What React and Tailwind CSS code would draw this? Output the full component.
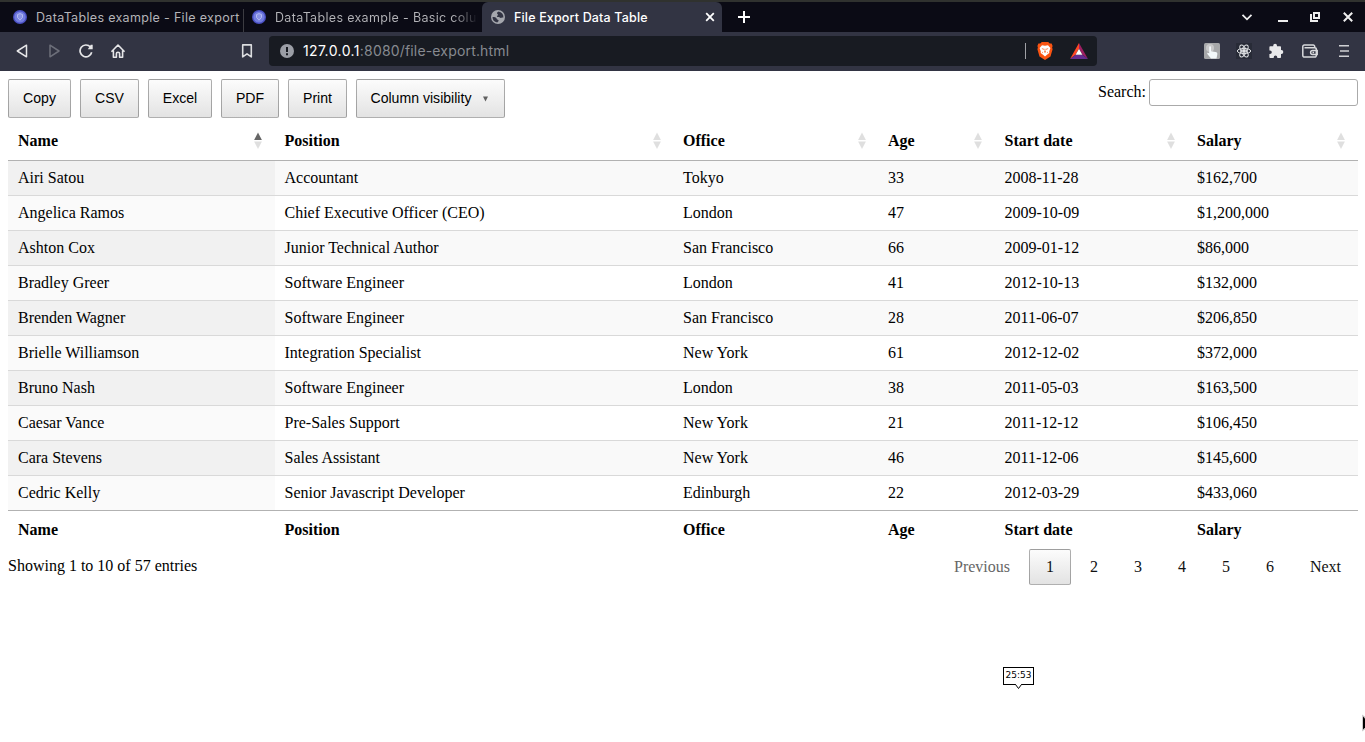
import React from "react";

const columns = ["Name", "Position", "Office", "Age", "Start date", "Salary"];

const rows = [
  ["Airi Satou", "Accountant", "Tokyo", "33", "2008-11-28", "$162,700"],
  ["Angelica Ramos", "Chief Executive Officer (CEO)", "London", "47", "2009-10-09", "$1,200,000"],
  ["Ashton Cox", "Junior Technical Author", "San Francisco", "66", "2009-01-12", "$86,000"],
  ["Bradley Greer", "Software Engineer", "London", "41", "2012-10-13", "$132,000"],
  ["Brenden Wagner", "Software Engineer", "San Francisco", "28", "2011-06-07", "$206,850"],
  ["Brielle Williamson", "Integration Specialist", "New York", "61", "2012-12-02", "$372,000"],
  ["Bruno Nash", "Software Engineer", "London", "38", "2011-05-03", "$163,500"],
  ["Caesar Vance", "Pre-Sales Support", "New York", "21", "2011-12-12", "$106,450"],
  ["Cara Stevens", "Sales Assistant", "New York", "46", "2011-12-06", "$145,600"],
  ["Cedric Kelly", "Senior Javascript Developer", "Edinburgh", "22", "2012-03-29", "$433,060"],
];

const gridCols = "grid grid-cols-[266.5px_398.5px_205px_116.5px_192.6px_170.9px]";

function TablesFavicon() {
  return (
    <svg className="size-[14px] shrink-0" viewBox="0 0 14 14">
      <circle cx="7" cy="7" r="7" fill="#4a50c4" />
      <circle cx="7" cy="7" r="5.600" fill="#747ee0" />
      <path d="M4.500 4.600L7 3.600l2.500 1v2.900L7 10.200 4.500 7.500z" fill="#8a93e6" stroke="#b4bbf2" strokeWidth="1" />
    </svg>
  );
}

function Globe() {
  return (
    <svg className="size-[14px] shrink-0" viewBox="0 0 14 14">
      <circle cx="7" cy="7" r="7" fill="#a5a7ad" />
      <path d="M7.600 1.600c-1 .5-1.700 1-1.500 1.900.1.700 1 .6 1 1.300 0 .8-1.300.8-1.200 1.600.1.700 1.100.5 1.900.6.900.1 1.100.9 2 .9.700 0 1.100-.5 2.600-.4A5.500 5.500 0 0 0 7.600 1.600z" fill="#323443" />
      <path d="M1.500 7.100c1.500-.1 3 .1 3.800.8.600.6.300 1.300 1 1.600.8.400 1.300.4 1.300 1.200 0 .7-.8 1-1.400 1.700A5.500 5.500 0 0 1 1.500 7.100z" fill="#323443" />
    </svg>
  );
}

function TabBar() {
  return (
    <div className="flex h-[32px] border-t-2 border-[#30322f] bg-[#0b0b15] text-[13px] text-[#b4b4b8]">
      <div className="flex w-[244px] items-center gap-[9px] pl-[13px]">
        <TablesFavicon />
        <span className="pt-[2px] text-[12.5px] whitespace-nowrap tracking-[0.32px]">DataTables example - File export</span>
      </div>
      <div className="mt-[7px] -ml-px h-[23px] w-px shrink-0 bg-[#3c3c42]" />
      <div className="flex w-[238px] items-center gap-[9px] pl-[8px]">
        <TablesFavicon />
        <span className="w-[203px] overflow-hidden bg-linear-to-r from-[#b4b4b8] from-88% to-transparent bg-clip-text pt-[2px] text-[12.5px] whitespace-nowrap text-transparent tracking-[0.32px]">
          DataTables example - Basic column
        </span>
      </div>
      <div className="flex w-[240px] items-center rounded-t-[6px] bg-[#323443] pr-[7px] pl-[9px] text-white">
        <Globe />
        <span className="ml-[9px] flex-1 pt-[2px] text-[12.5px] font-medium whitespace-nowrap tracking-[0.16px]">File Export Data Table</span>
        <svg className="size-[10px]" viewBox="0 0 10 10" stroke="#fff" strokeWidth="1.8">
          <path d="M1.200 1.200l7.600 7.600M8.800 1.200l-7.600 7.600" />
        </svg>
      </div>
      <svg className="mt-[9px] ml-[16px] size-[12px]" viewBox="0 0 12 12" stroke="#fff" strokeWidth="2">
        <path d="M6 0v12M0 6h12" />
      </svg>
      <div className="flex-1" />
      <div className="flex h-full items-center pr-[12px] pb-px">
        <svg className="h-[12px] w-[12px]" viewBox="0 0 12 12" fill="none" stroke="#eee" strokeWidth="1.800">
          <path d="M1.500 3.800L6 8.300l4.500-4.500" />
        </svg>
        <svg className="ml-[25px] h-[12px] w-[10px]" viewBox="0 0 10 12">
          <rect y="9" width="10" height="2" fill="#eee" />
        </svg>
        <svg className="ml-[22px] size-[10px]" viewBox="0 0 10 10" fill="none" stroke="#eee" strokeWidth="2">
          <path d="M4 1h5v5H4zM1 2v7h7" />
        </svg>
        <svg className="ml-[23px] size-[10px]" viewBox="0 0 10 10" stroke="#eee" strokeWidth="2">
          <path d="M.8.8l8.400 8.400M9.200.8L.8 9.200" />
        </svg>
      </div>
    </div>
  );
}

function ReactMark() {
  return (
    <svg className="size-[16px]" viewBox="0 0 16 16" fill="none" stroke="#dfe1e4" strokeWidth="1">
      <rect width="16" height="16" fill="#282b37" stroke="none" />
      <circle cx="8" cy="8" r="1.400" fill="#dfe1e4" />
      <ellipse cx="8" cy="8" rx="6.700" ry="2.600" />
      <ellipse cx="8" cy="8" rx="6.700" ry="2.600" transform="rotate(60 8 8)" />
      <ellipse cx="8" cy="8" rx="6.700" ry="2.600" transform="rotate(120 8 8)" />
    </svg>
  );
}

function Toolbar() {
  return (
    <div className="flex h-[39px] items-center bg-[#323443] pr-[16px] pb-px pl-[16px]">
      <svg className="size-[14px]" viewBox="0 0 14 14" fill="none" stroke="#e6e6e8" strokeWidth="1.500" strokeLinejoin="round">
        <path d="M10.500 1.200v11.600L1.300 7z" />
      </svg>
      <svg className="ml-[17px] size-[14px]" viewBox="0 0 14 14" fill="none" stroke="#6d6f7a" strokeWidth="1.500" strokeLinejoin="round">
        <path d="M3 1.200v11.600L12 7z" />
      </svg>
      <svg className="ml-[18px] size-[14px]" viewBox="0 0 14 14" fill="none" stroke="#e6e6e8" strokeWidth="1.700">
        <path d="M12.700 8.300A5.900 5.900 0 1 1 11.400 3" />
        <path d="M8.800 5.200h4.900V.7h-1.900z" fill="#e6e6e8" stroke="none" />
      </svg>
      <svg className="ml-[17px] size-[16px]" viewBox="0 0 16 16" fill="none" stroke="#e6e6e8" strokeWidth="1.600" strokeLinejoin="round" strokeLinecap="round">
        <path d="M1.900 8.300L8 2l6.100 6.300M3.400 7.400v6.800h3v-3.600c0-.9.600-1.400 1.600-1.400s1.600.5 1.600 1.400v3.600h3V7.400" />
      </svg>
      <svg className="ml-[115px] h-[14px] w-[12px]" viewBox="0 0 12 14" fill="none" stroke="#dcdde0" strokeWidth="1.600" strokeLinejoin="round">
        <path d="M1.700.9h8.600v12L6 9.800l-4.300 3.100z" />
      </svg>
      <div className="ml-[16px] flex h-[30px] w-[828px] items-center rounded-[4px] bg-[#181b22] pr-[9px] pl-[11px]">
        <svg className="size-[14px]" viewBox="0 0 14 14">
          <circle cx="7" cy="7" r="7" fill="#9b9ea6" />
          <path d="M6 3h2v5H6zM6 9.200h2v2H6z" fill="#181b22" />
        </svg>
        <span className="ml-[9px] flex-1 pb-[2px] whitespace-nowrap text-[14px] tracking-[0.17px] text-[#878a90]">
          <span className="tracking-[0.4px] text-white">127.0.0.1</span>:8080/file-export.html
        </span>
        <div className="h-[16px] w-px bg-[#a0a1a6]" />
        <svg className="ml-[11px] h-[18px] w-[16px]" viewBox="0 0 16 18">
          <path d="M4.800 0h6.400l1.500 1.600 1.900-.2 1 2.500-.5 1.600.5 1.700-2.100 7.300L8 18l-5.500-3.500L.4 7.200l.5-1.700L.4 3.900l1-2.500 1.900.2z" fill="#fb5412" />
          <path d="M5 3.300l3 .5 3-.5 2.400 2.800-1.200 3.300.1 1.500-2.300 1.900L8 14.500l-2-1.700-2.300-1.900.1-1.500L2.600 6.100z" fill="#fff" />
          <path d="M4.500 6.200l2.300.5-.4 1.200zM11.500 6.200l-2.300.5.4 1.200zM7.600 6.800h.8L8.300 9l.7 1L8 10.700 7 10l.7-1zM5.300 9.600l.8 1.600-1-.4zM10.700 9.600l-.8 1.600 1-.4z" fill="#fb5412" />
        </svg>
        <svg className="ml-[17px] h-[16px] w-[18px]" viewBox="0 0 18 16">
          <path d="M9 0v5.500L5.600 11.800 0 16z" fill="#ff4724" />
          <path d="M9 0l9 16-5.600-4.200L9 5.500z" fill="#9e1f63" />
          <path d="M0 16l5.600-4.200h6.800L18 16z" fill="#662d91" />
          <path d="M9 5.800l3.400 6H5.600z" fill="#fff" />
        </svg>
      </div>
      <div className="flex flex-1 items-center justify-end">
        <svg className="size-[16px]" viewBox="0 0 16 16">
          <rect width="16" height="16" rx="1.500" fill="#a7a8aa" />
          <circle cx="6" cy="5" r="4" fill="#c8c8c9" />
          <path d="M5.200 4.200c0-1.300 1.800-1.300 1.800 0v4l4.500.8c1.500.3 2 1 1.800 2.400L12.500 15.500H7L3.400 11c-.6-1 .5-1.700 1.800-.6z" fill="#f3f8fa" />
        </svg>
        <div className="ml-[16px]"><ReactMark /></div>
        <svg className="ml-[16px] size-[16px]" viewBox="0 0 16 16" fill="#e9e9eb">
          <path d="M2.200 3.200h3V2.700a1.900 1.900 0 1 1 3.800 0v.5h3.200c.5 0 .8.300.8.800v3.100h.4a1.900 1.900 0 0 1 0 3.800H13v3.300c0 .5-.3.800-.8.800H9.300v-.6a1.800 1.800 0 0 0-3.600 0v.6H2.200c-.5 0-.8-.3-.8-.8v-3.200H2a1.800 1.800 0 0 0 0-3.600h-.6V4c0-.5.300-.8.800-.8z" />
        </svg>
        <svg className="ml-[18px] h-[14px] w-[16px]" viewBox="0 0 16 14" fill="none" stroke="#d8d9dc" strokeWidth="1.500">
          <path d="M12.700 3.600V2.500A1.500 1.500 0 0 0 11.200 1H2.300A1.500 1.500 0 0 0 .8 2.500v8.900a1.700 1.700 0 0 0 1.700 1.700h10.300a1.500 1.500 0 0 0 1.500-1.500V5.200a1.500 1.500 0 0 0-1.500-1.500H2.500" />
          <path d="M15.200 6.400h-4.600a2 2 0 0 0 0 4h4.600zM10.500 8.400h1.600" />
        </svg>
        <svg className="ml-[21px] h-[12px] w-[10px]" viewBox="0 0 10 12" fill="#cfd0d4">
          <path d="M0 0h10v1.600H0zM1 5.200h9v1.600H1zM0 10.400h10V12H0z" />
        </svg>
      </div>
    </div>
  );
}

const actions = [
  ["Copy", "w-[63px]"],
  ["CSV", "w-[59px]"],
  ["Excel", "w-[64px]"],
  ["PDF", "w-[58px]"],
  ["Print", "w-[59px]"],
];

function Controls() {
  return (
    <div className="flex h-[42px] items-start justify-between">
      <div className="flex gap-[9px] font-['Liberation_Sans',sans-serif] text-[14.08px]">
        {actions.map(([label, width]) => (
          <button
            key={label}
            className={`${width} h-[39px] rounded-[2px] border border-black/30 bg-linear-to-b from-[#fcfcfc] to-[#e3e3e3] pb-[2px]`}
          >
            {label}
          </button>
        ))}
        <button className="flex h-[39px] w-[149px] items-center rounded-[2px] border border-black/30 bg-linear-to-b from-[#fcfcfc] to-[#e3e3e3] pb-[2px] pl-[13.5px]">
          Column visibility
          <svg className="mt-[2px] ml-[12px] h-[6px] w-[5px]" viewBox="0 0 5 6">
            <path d="M0 .5h5L2.500 5.500z" fill="#000" fillOpacity="0.6" />
          </svg>
        </button>
      </div>
      <label className="flex items-start">
        <span className="pt-[4px]">Search:</span>
        <input className="ml-[3px] h-[27px] w-[209px] rounded-[3px] border border-[#aaa] bg-transparent p-[5px]" />
      </label>
    </div>
  );
}

function SortMark({ active }) {
  return (
    <svg className="mr-[2.5px] h-[17px] w-[8px]" viewBox="0 0 8 17" fill="#000">
      <path d="M4 .5L7.900 8H.1z" fillOpacity={active ? 0.6 : 0.125} />
      <path d="M.1 9.500h7.800L4 17z" fillOpacity="0.125" />
    </svg>
  );
}

function DataTable() {
  return (
    <div className="w-[1350px]">
      <div className={`${gridCols} h-[40px] border-b border-black/30 font-bold`}>
        {columns.map((name, i) => (
          <div key={name} className="flex items-center justify-between pr-[10px] pl-[10px]">
            {name}
            <SortMark active={i === 0} />
          </div>
        ))}
      </div>
      {rows.map((row, r) => (
        <div
          key={row[0]}
          className={`${gridCols} ${r === 0 ? "h-[34px]" : "h-[35px] border-t border-[#d9d9d9]"} ${r % 2 ? "bg-white" : "bg-[#f9f9f9]"}`}
        >
          {row.map((cell, c) => (
            <div
              key={c}
              className={`flex items-center pl-[10px] ${c === 0 ? (r % 2 ? "bg-[#fafafa]" : "bg-[#f1f1f1]") : ""}`}
            >
              {cell}
            </div>
          ))}
        </div>
      ))}
      <div className={`${gridCols} h-[39px] border-t border-black/30 pb-px font-bold`}>
        {columns.map((name) => (
          <div key={name} className="flex items-center pl-[10px]">{name}</div>
        ))}
      </div>
    </div>
  );
}

function TableFooter() {
  return (
    <div className="flex items-start justify-between">
      <div className="pt-[8px] leading-[18px]">Showing 1 to 10 of 57 entries</div>
      <div className="flex h-[36px] gap-[2px] text-[#111]">
        <span className="flex w-[90px] items-center justify-center text-[#666]">Previous</span>
        <span className="flex w-[42px] items-center justify-center rounded-[2px] border border-black/30 bg-linear-to-b from-[#fcfcfc] to-[#e3e3e3]">1</span>
        {["2", "3", "4", "5", "6"].map((n) => (
          <span key={n} className="flex w-[42px] items-center justify-center">{n}</span>
        ))}
        <span className="flex w-[65px] items-center justify-center">Next</span>
      </div>
    </div>
  );
}

export default function App() {
  return (
    <div className="relative h-[742px] w-[1365px] overflow-hidden bg-white text-black">
      <div className="font-['Inter',sans-serif]">
        <TabBar />
        <Toolbar />
      </div>
      <div className="pt-[8px] pr-[7px] pl-[8px] font-['Liberation_Serif',serif] text-[16px] leading-[18px]">
        <Controls />
        <DataTable />
        <TableFooter />
      </div>
      <div className="absolute top-[667px] left-[1003px] flex h-[18px] w-[31px] items-center justify-center border border-black bg-white pb-[2px] font-['DejaVu_Sans',sans-serif] text-[9px] leading-none">
        25:53
        <svg className="absolute top-[16px] left-[11px] h-[6px] w-[7px]" viewBox="0 0 7 6">
          <path d="M.5 0L3.500 4.500 6.500 0z" fill="#fff" />
          <path d="M.5.5l3 4 3-4" fill="none" stroke="#000" />
        </svg>
      </div>
      <svg className="absolute top-[713px] left-[1361px] h-[20px] w-[4px]" viewBox="0 0 4 20">
        <path d="M1 1.500l3 2v13l-3 2z" fill="#ccc" />
        <path d="M2 3.500l2 2v9l-2 2z" fill="#000" />
      </svg>
    </div>
  );
}
